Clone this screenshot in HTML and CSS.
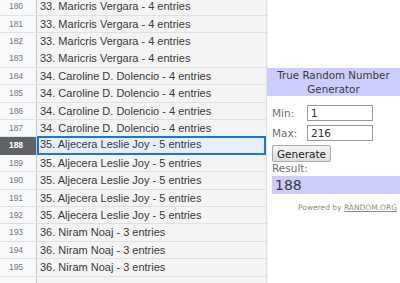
FILE: index.html
```html
<!DOCTYPE html>
<html lang="en">
  <head>
    <meta charset="UTF-8" />
    <meta name="viewport" content="width=device-width, initial-scale=1.0" />
    <title>Raffle Sheet || Random Number</title>
    <link rel="stylesheet" href="styles.css">
  </head>
  <body>
    <div class="page">
      <div class="sheet">
        <div class="row"><div class="num">180</div><div class="cell">33. Maricris Vergara - 4 entries</div><div class="edge"></div></div>
        <div class="row"><div class="num">181</div><div class="cell">33. Maricris Vergara - 4 entries</div><div class="edge"></div></div>
        <div class="row"><div class="num">182</div><div class="cell">33. Maricris Vergara - 4 entries</div><div class="edge"></div></div>
        <div class="row"><div class="num">183</div><div class="cell">33. Maricris Vergara - 4 entries</div><div class="edge"></div></div>
        <div class="row"><div class="num">184</div><div class="cell">34. Caroline D. Dolencio - 4 entries</div><div class="edge"></div></div>
        <div class="row"><div class="num">185</div><div class="cell">34. Caroline D. Dolencio - 4 entries</div><div class="edge"></div></div>
        <div class="row"><div class="num">186</div><div class="cell">34. Caroline D. Dolencio - 4 entries</div><div class="edge"></div></div>
        <div class="row"><div class="num">187</div><div class="cell">34. Caroline D. Dolencio - 4 entries</div><div class="edge"></div></div>
        <div class="row selected"><div class="num">188</div><div class="cell">35. Aljecera Leslie Joy - 5 entries</div><div class="edge"></div></div>
        <div class="row"><div class="num">189</div><div class="cell">35. Aljecera Leslie Joy - 5 entries</div><div class="edge"></div></div>
        <div class="row"><div class="num">190</div><div class="cell">35. Aljecera Leslie Joy - 5 entries</div><div class="edge"></div></div>
        <div class="row"><div class="num">191</div><div class="cell">35. Aljecera Leslie Joy - 5 entries</div><div class="edge"></div></div>
        <div class="row"><div class="num">192</div><div class="cell">35. Aljecera Leslie Joy - 5 entries</div><div class="edge"></div></div>
        <div class="row"><div class="num">193</div><div class="cell">36. Niram Noaj - 3 entries</div><div class="edge"></div></div>
        <div class="row"><div class="num">194</div><div class="cell">36. Niram Noaj - 3 entries</div><div class="edge"></div></div>
        <div class="row"><div class="num">195</div><div class="cell">36. Niram Noaj - 3 entries</div><div class="edge"></div></div>
        <div class="row"><div class="num"></div><div class="cell"></div><div class="edge"></div></div>
      </div>

      <div class="side">
        <div class="widget">
          <div class="widget-title">True Random Number Generator</div>
          <div class="widget-body">
            <div class="field"><span class="label">Min:</span><input class="box" type="text" value="1"></div>
            <div class="field"><span class="label">Max:</span><input class="box" type="text" value="216"></div>
            <button class="generate">Generate</button>
            <div class="label result-label">Result:</div>
            <div class="result">188</div>
            <div class="powered">Powered by <u>RANDOM.ORG</u></div>
          </div>
        </div>
      </div>
    </div>
  </body>
</html>
```

FILE: styles.css
```css
body {
  margin: 0;
  background-color: #ffffff;
  overflow: hidden;
}


.page {
  display: flex;
  height: 283px;
}


.sheet {
  width: 268px;
  margin-top: -1.7px;
  font-family: "Liberation Sans", Arial, sans-serif;
}


.row {
  display: grid;
  grid-template-columns: 37px 229px 2px;
  height: 17.4px;
  box-sizing: border-box;
  border-bottom: 1px solid #e1e1e1;
}


.num {
  background-color: #f8f9fa;
  border-right: 1px solid #c6c6c6;
  color: #7a7a7a;
  font-size: 8.5px;
  text-align: center;
  line-height: 16.4px;
  padding-right: 4px;
}


.cell {
  background-color: #f4f4f4;
  color: #3a3a3a;
  font-size: 11px;
  line-height: 16.4px;
  padding-left: 3px;
  white-space: nowrap;
}


.edge {
  background-color: #f4f4f4;
  border-left: 1px solid #e1e1e1;
}


.selected .num {
  background-color: #5f6368;
  color: #ffffff;
  font-weight: bold;
}


.selected .cell {
  background-color: #e8eefb;
  border: 2px solid #1a73e8;
  line-height: 13.4px;
  padding-left: 1px;
  margin-top: -1px;
  height: 18.4px;
  box-sizing: border-box;
}


.side {
  flex: 1;
  padding-top: 68px;
  font-family: "DejaVu Sans", Verdana, sans-serif;
}


.widget {
  background-color: #ffffff;
  margin-left: -1px;
}


.widget-title {
  background-color: #ccccff;
  color: #3a3a3a;
  font-size: 10.3px;
  line-height: 14px;
  text-align: center;
  padding: 0 2px;
  height: 28px;
}


.widget-body {
  padding: 9px 0 0 5px;
}


.field {
  display: flex;
  align-items: center;
  margin-bottom: 4px;
}


.label {
  color: #707070;
  font-size: 10.5px;
  width: 35px;
}


.box {
  width: 66px;
  height: 16px;
  box-sizing: border-box;
  border: 1px solid #9a9a9a;
  padding: 0 3px;
  font-family: "DejaVu Sans", Verdana, sans-serif;
  font-size: 10.5px;
  color: #333333;
  outline: none;
}


.generate {
  display: block;
  margin-top: 3px;
  height: 17px;
  width: 59px;
  padding: 0;
  border: 1px solid #a9a9a9;
  border-radius: 2px;
  background: linear-gradient(#f6f6f6, #dedede);
  font-family: "DejaVu Sans", Verdana, sans-serif;
  font-size: 10.5px;
  color: #222222;
}


.result-label {
  width: auto;
  line-height: 13px;
  margin-top: 0;
}


.result {
  background-color: #ccccff;
  color: #3a3a3a;
  font-size: 14px;
  line-height: 18px;
  height: 18px;
  margin-top: 1px;
  padding-left: 3px;
}


.powered {
  color: #8a8a8a;
  font-size: 7.5px;
  text-align: right;
  margin-top: 9px;
  padding-right: 3px;
}
```
